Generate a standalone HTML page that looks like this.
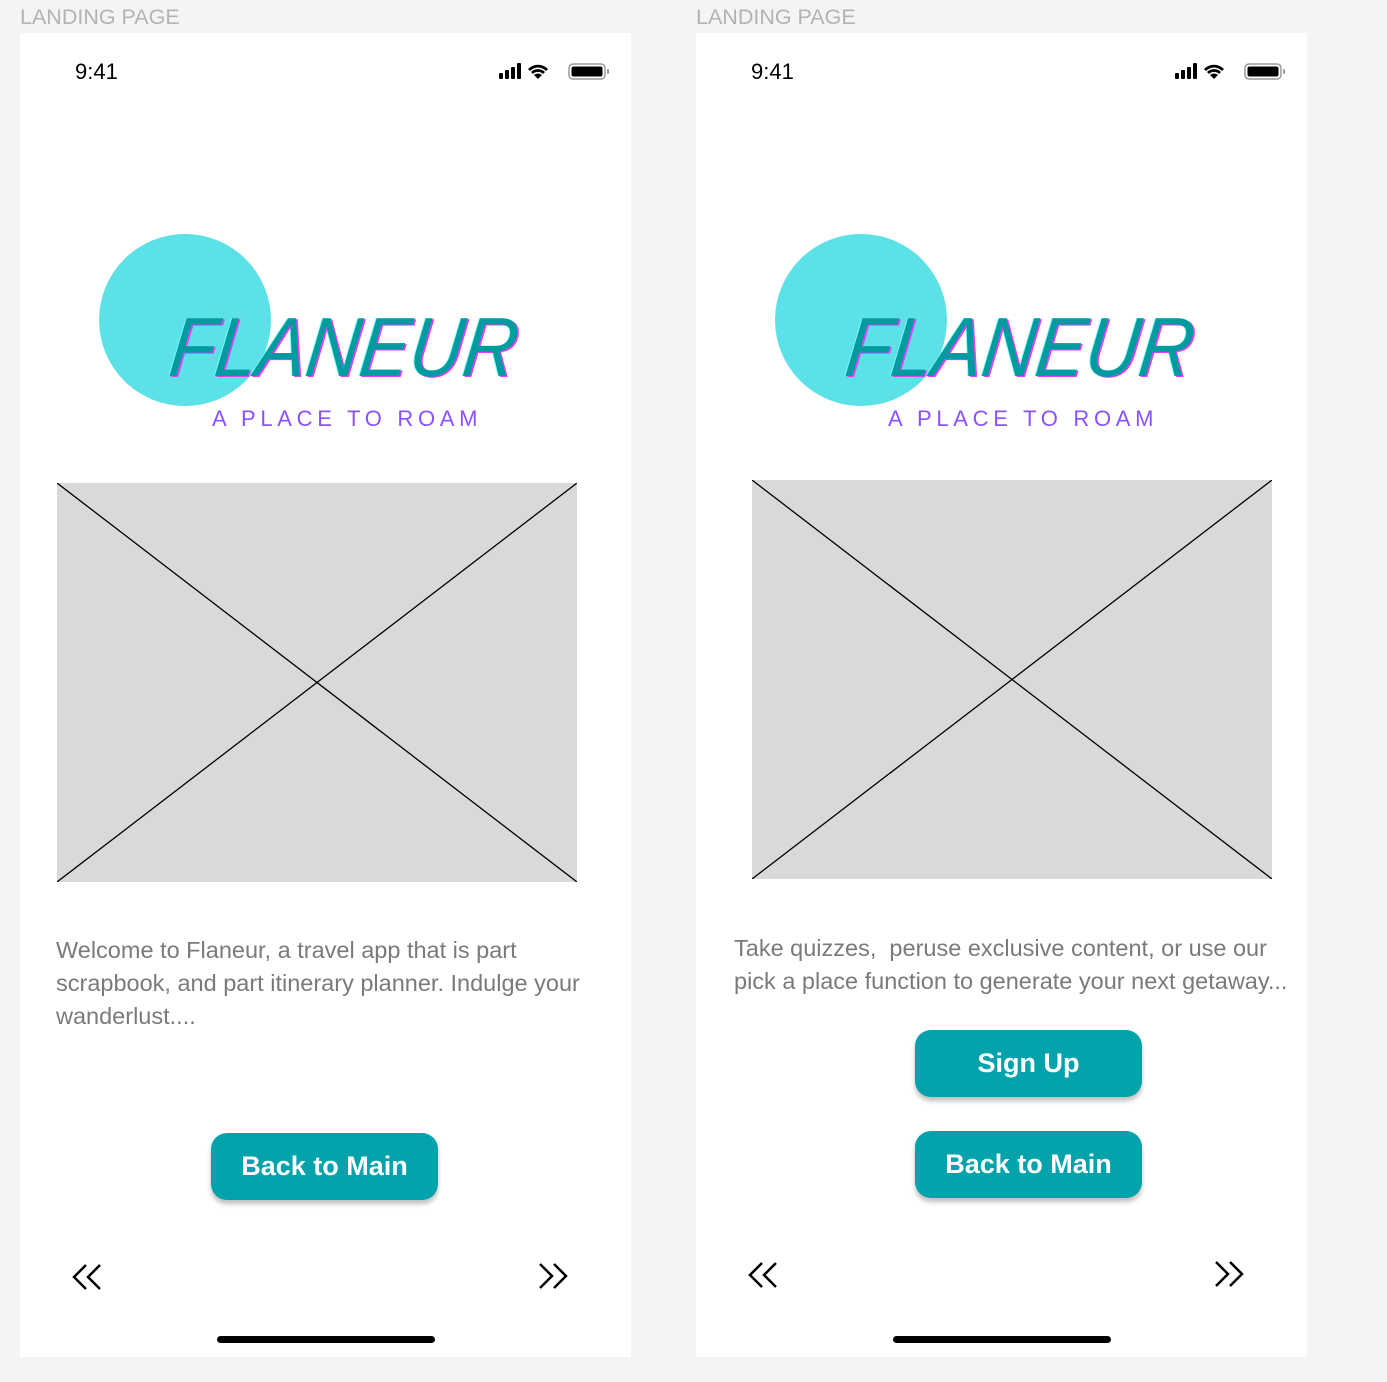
<!DOCTYPE html>
<html><head><meta charset="utf-8"><style>
*{margin:0;padding:0;box-sizing:border-box}
body{width:1387px;height:1382px;background:#f4f4f4;position:relative;overflow:hidden;font-family:"Liberation Sans",Arial,sans-serif}
.lbl{position:absolute;top:5px;font-size:21.5px;color:#b3b3b3}
.ph{position:absolute;top:33px;width:611px;height:1324px;background:#fff}
.ph>*{position:absolute}
.time{left:55px;top:26px;font-size:22px;color:#000}
.stat{left:479px;top:28px}
.circ{left:79px;top:201px;width:172px;height:172px;border-radius:50%;background:#5ce1e6}
.logo{left:156px;top:272px;font-size:84px;font-style:italic;color:#009b9e;white-space:nowrap;transform:scaleX(.885) skewX(-8deg);transform-origin:left top;text-shadow:2px 1px 0 #e040fb,-1px 0 0 #7ff;line-height:1}
.tag{left:192px;top:373px;font-size:22px;letter-spacing:4.7px;color:#8c52ff;white-space:nowrap}
.img{width:520px;height:399px;background:#d9d9d9}
.txt{font-size:23.5px;line-height:33px;color:#7a7a7a;white-space:nowrap}
.btn{width:227px;height:67px;border-radius:16px;background:#04a3ab;color:#fff;font-weight:bold;font-size:27px;text-align:center;line-height:67px;box-shadow:0 4px 5px rgba(0,0,0,.25)}
.bar{left:197px;top:1303px;width:218px;height:7px;border-radius:4px;background:#000}
</style></head><body>
<div class="lbl" style="left:20px">LANDING PAGE</div>
<div class="lbl" style="left:696px">LANDING PAGE</div>

<div class="ph" style="left:20px">
<div class="time">9:41</div>
<svg class="stat" width="112" height="24" viewBox="0 0 112 24"><rect x="0" y="12" width="4" height="6" rx="1"/><rect x="6" y="9" width="4" height="9" rx="1"/><rect x="12" y="6" width="4" height="12" rx="1"/><rect x="18" y="2" width="4" height="16" rx="1"/><path d="M29 8a14 14 0 0 1 20 0l-2 2a11 11 0 0 0-16 0z M32 11a10 10 0 0 1 14 0l-2 2a7 7 0 0 0-10 0z M35 14a6 6 0 0 1 8 0l-4 4z"/><rect x="70" y="3" width="36" height="15" rx="4" fill="none" stroke="#999" stroke-width="1.5"/><rect x="72.5" y="5.5" width="31" height="10" rx="2"/><rect x="108" y="8" width="2" height="5" rx="1" fill="#999"/></svg>
<div class="circ"></div>
<div class="logo">FLANEUR</div>
<div class="tag">A PLACE TO ROAM</div>
<svg class="img" style="left:37px;top:450px" viewBox="0 0 520 399"><rect width="520" height="399" fill="#d9d9d9"/><path d="M0 0L520 399M520 0L0 399" stroke="#000" stroke-width="1.3"/></svg>
<div class="txt" style="left:36px;top:901px">Welcome to Flaneur, a travel app that is part<br>scrapbook, and part itinerary planner. Indulge your<br>wanderlust....</div>
<div class="btn" style="left:191px;top:1100px">Back to Main</div>
<svg style="left:50px;top:1229px" width="36" height="30"><path d="M16 3L4 15L16 27M30 3L18 15L30 27" fill="none" stroke="#000" stroke-width="2.5"/></svg>
<svg style="left:516px;top:1228px" width="36" height="30"><path d="M4 3L16 15L4 27M18 3L30 15L18 27" fill="none" stroke="#000" stroke-width="2.5"/></svg>
<div class="bar"></div>
</div>

<div class="ph" style="left:696px">
<div class="time">9:41</div>
<svg class="stat" width="112" height="24" viewBox="0 0 112 24"><rect x="0" y="12" width="4" height="6" rx="1"/><rect x="6" y="9" width="4" height="9" rx="1"/><rect x="12" y="6" width="4" height="12" rx="1"/><rect x="18" y="2" width="4" height="16" rx="1"/><path d="M29 8a14 14 0 0 1 20 0l-2 2a11 11 0 0 0-16 0z M32 11a10 10 0 0 1 14 0l-2 2a7 7 0 0 0-10 0z M35 14a6 6 0 0 1 8 0l-4 4z"/><rect x="70" y="3" width="36" height="15" rx="4" fill="none" stroke="#999" stroke-width="1.5"/><rect x="72.5" y="5.5" width="31" height="10" rx="2"/><rect x="108" y="8" width="2" height="5" rx="1" fill="#999"/></svg>
<div class="circ"></div>
<div class="logo">FLANEUR</div>
<div class="tag">A PLACE TO ROAM</div>
<svg class="img" style="left:56px;top:447px" viewBox="0 0 520 399"><rect width="520" height="399" fill="#d9d9d9"/><path d="M0 0L520 399M520 0L0 399" stroke="#000" stroke-width="1.3"/></svg>
<div class="txt" style="left:38px;top:899px">Take quizzes,&nbsp; peruse exclusive content, or use our<br>pick a place function to generate your next getaway...</div>
<div class="btn" style="left:219px;top:997px">Sign Up</div>
<div class="btn" style="left:219px;top:1098px">Back to Main</div>
<svg style="left:50px;top:1227px" width="36" height="30"><path d="M16 3L4 15L16 27M30 3L18 15L30 27" fill="none" stroke="#000" stroke-width="2.5"/></svg>
<svg style="left:516px;top:1226px" width="36" height="30"><path d="M4 3L16 15L4 27M18 3L30 15L18 27" fill="none" stroke="#000" stroke-width="2.5"/></svg>
<div class="bar"></div>
</div>
</body></html>
